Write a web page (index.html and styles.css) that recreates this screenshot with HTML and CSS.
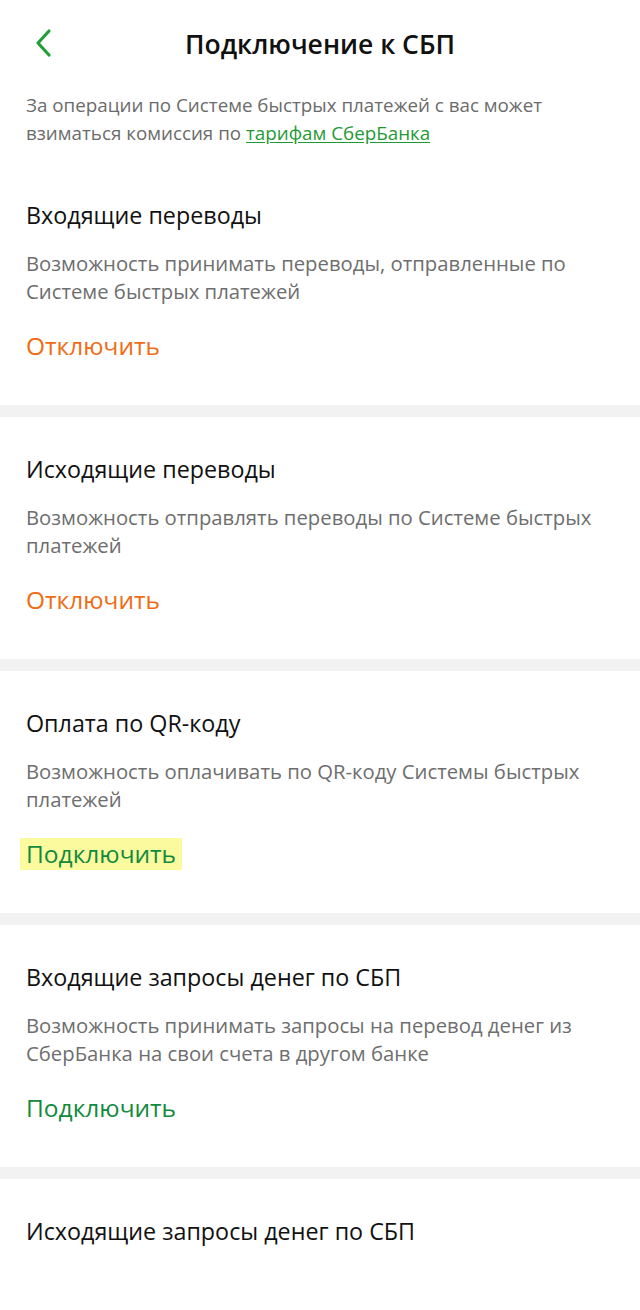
FILE: index.html
```html
<!DOCTYPE html>
<html lang="ru">
<head>
  <meta charset="UTF-8" />
  <meta name="viewport" content="width=device-width, initial-scale=1" />
  <title>Подключение к СБП</title>
  <link rel="stylesheet" href="styles.css">
</head>
<body>
  <header class="topbar">
    <a class="back" href="#" aria-label="Назад">
      <svg width="20" height="30" viewBox="0 0 20 30">
        <path d="M16 3 L5 15 L16 27" fill="none" stroke="#21a038" stroke-width="3.2" stroke-linecap="round" stroke-linejoin="round"/>
      </svg>
    </a>
    <h1>Подключение к СБП</h1>
  </header>

  <p class="intro">
    За операции по Системе быстрых платежей с вас может взиматься комиссия по <a href="#">тарифам СберБанка</a>
  </p>

  <section class="option">
    <h2>Входящие переводы</h2>
    <p>Возможность принимать переводы, отправленные по Системе быстрых платежей</p>
    <a class="action off" href="#">Отключить</a>
  </section>

  <section class="option">
    <h2>Исходящие переводы</h2>
    <p>Возможность отправлять переводы по Системе быстрых платежей</p>
    <a class="action off" href="#">Отключить</a>
  </section>

  <section class="option">
    <h2>Оплата по QR-коду</h2>
    <p>Возможность оплачивать по QR-коду Системы быстрых платежей</p>
    <a class="action on marked" href="#">Подключить</a>
  </section>

  <section class="option">
    <h2>Входящие запросы денег по СБП</h2>
    <p>Возможность принимать запросы на перевод денег из СберБанка на свои счета в другом банке</p>
    <a class="action on" href="#">Подключить</a>
  </section>

  <section class="option">
    <h2>Исходящие запросы денег по СБП</h2>
  </section>
</body>
</html>
```

FILE: styles.css
```css
body {
  font-family: 'Open Sans', 'Noto Sans', sans-serif;
  background-color: #fff;
  margin: 0;
  padding: 0;
  color: #111;
}
.topbar {
  position: relative;
  height: 88px;
  display: flex;
  align-items: center;
  justify-content: center;
}
.back {
  position: absolute;
  left: 33px;
  top: 28px;
  display: block;
  line-height: 0;
}
.topbar h1 {
  margin: 0;
  font-size: 26.5px;
  font-weight: 600;
  color: #111;
}
.intro {
  margin: 0;
  padding: 3px 26px 16px;
  font-size: 18.8px;
  line-height: 28px;
  color: #6b6b6b;
}
.intro a {
  color: #1f9a36;
  text-decoration: underline;
  text-underline-offset: 2px;
}
.option {
  padding: 38px 26px 43px;
  border-bottom: 12px solid #f2f2f2;
}
.option:last-child {
  border-bottom: none;
}
.option h2 {
  margin: 0;
  font-size: 23.3px;
  font-weight: 400;
  line-height: 28px;
  color: #111;
}
.option p {
  margin: 20px 0 0;
  font-size: 20.3px;
  line-height: 28px;
  color: #6e6e6e;
}
.action {
  display: inline-block;
  margin-top: 25px;
  font-size: 24.5px;
  line-height: 32px;
  text-decoration: none;
}
.action.off {
  color: #f06c14;
}
.action.on {
  color: #128a3e;
}
.action.marked {
  background-color: #fbfa9e;
  padding: 0 6px;
  margin-left: -6px;
}
```
